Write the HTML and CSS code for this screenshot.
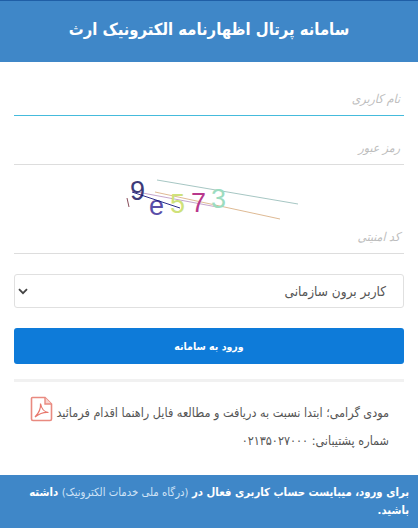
FILE: index.html
```html
<!DOCTYPE html>
<html lang="fa" dir="rtl">
<head>
<meta charset="utf-8">
<title>سامانه پرتال اظهارنامه الکترونیک ارث</title>
<link rel="stylesheet" href="styles.css">
</head>
<body>
<div class="page">
  <header class="header"><h1>سامانه پرتال اظهارنامه الکترونیک ارث</h1></header>
  <main class="form">
    <div class="field active first"><span class="placeholder">نام کاربری</span></div>
    <div class="field"><span class="placeholder">رمز عبور</span></div>
    <div class="captcha-wrap">
      <svg class="captcha" width="184" height="56" viewBox="0 0 184 56" aria-label="captcha">
        <line x1="41" y1="15" x2="182" y2="39" stroke="#8fb8b4" stroke-width="0.8"/>
        <line x1="39" y1="27" x2="164" y2="54" stroke="#d6a878" stroke-width="0.8"/>
        <line x1="16" y1="26" x2="101" y2="42" stroke="#b58fc0" stroke-width="0.8"/>
        <text class="c1" x="14" y="35">9</text>
        <text class="c2" x="33" y="50">e</text>
        <text class="c3" x="54" y="48">5</text>
        <text class="c4" x="75" y="47">7</text>
        <text class="c5" x="95" y="43">3</text>
        <line x1="16" y1="27" x2="64" y2="43" stroke="#14147a" stroke-width="0.9"/>
        <line x1="11" y1="33" x2="13" y2="42" stroke="#6a2030" stroke-width="0.8"/>
      </svg>
    </div>
    <div class="field captcha-field"><span class="placeholder">کد امنیتی</span></div>
    <div class="select">
      <span class="select-text">کاربر برون سازمانی</span>
      <svg class="chev" width="10" height="7" viewBox="0 0 10 7"><path d="M1 1.2 L5 5.2 L9 1.2" fill="none" stroke="#444" stroke-width="1.8"/></svg>
    </div>
    <button class="submit" type="button">ورود به سامانه</button>
    <hr class="divider">
    <p class="note">مودی گرامی؛ ابتدا نسبت به دریافت و مطالعه فایل راهنما اقدام فرمائید
      <svg class="pdf" width="23" height="26" viewBox="0 0 23 26">
        <path d="M2.5 1.5 H15 L21.5 8 V23 Q21.5 24.5 20 24.5 H3 Q1.5 24.5 1.5 23 V2.5 Q1.5 1.5 2.5 1.5 Z" fill="#fff" stroke="#e98a80" stroke-width="1.6"/>
        <path d="M15 1.5 V8 H21.5" fill="#f8d5d0" stroke="#e98a80" stroke-width="1.4"/>
        <path d="M5 21 C8 18 11 13 10.5 7.5 C11.5 13 14 16 18.5 16.5 C14 16 9 18 5 21 Z" fill="none" stroke="#e8776c" stroke-width="1.2"/>
      </svg>
    </p>
    <p class="support">شماره پشتیبانی: ۰۲۱۳۵۰۲۷۰۰۰</p>
  </main>
  <footer class="footer">برای ورود، میبایست حساب کاربری فعال در <span class="light">(درگاه ملی خدمات الکترونیک)</span> داشته باشید.</footer>
</div>
</body>
</html>
```
FILE: styles.css
```css
* { box-sizing: border-box; }
html, body { margin: 0; padding: 0; }
body {
  width: 418px;
  height: 528px;
  overflow: hidden;
  background: #fff;
  font-family: "DejaVu Sans", "Noto Sans", sans-serif;
  font-stretch: condensed;
  color: #555;
}
.page { display: flex; flex-direction: column; height: 528px; }
.header {
  height: 62px;
  background: #3f87c8;
  border-top: 1px solid #1f5ea6;
  padding-bottom: 3px;
  display: flex;
  align-items: center;
  justify-content: center;
  flex: none;
}
.header h1 { margin: 0; color: #fff; font-size: 16.5px; font-weight: 700; line-height: 1; }
.form { flex: 1; padding: 0 14px; display: flex; flex-direction: column; }
.field {
  height: 49px;
  border-bottom: 1px solid #ddd;
  display: flex;
  align-items: flex-end;
  padding: 0 4px 8px 0;
  flex: none;
}
.field.first { height: 54px; }
.field.active { border-bottom-color: #45bbdc; }
.placeholder { font-size: 12.2px; color: #bdbdbd; font-style: italic; line-height: 16px; }
.captcha-wrap { height: 56px; padding-right: 104px; display: flex; flex: none; }
.captcha { display: block; direction: ltr; }
.captcha text { font-family: "Liberation Sans", sans-serif; font-size: 27px; }
.c1 { fill: #3d3a78; }
.c2 { fill: #5a4ea8; font-size: 30px; }
.c3 { fill: #cfe27a; }
.c4 { fill: #b8388c; }
.c5 { fill: #9cdcc0; }
.field.captcha-field { height: 33px; }
.select {
  margin-top: 20px;
  height: 34px;
  border: 1px solid #e0e0e0;
  border-radius: 3px;
  display: flex;
  align-items: center;
  justify-content: space-between;
  padding: 0 17px 0 3px;
  flex: none;
}
.select-text { font-size: 13.5px; color: #555; }
.submit {
  margin-top: 20px;
  height: 36px;
  border: 0;
  border-radius: 3px;
  background: #0e7bd9;
  color: #fff;
  font: 700 10.5px "DejaVu Sans", sans-serif;
  font-stretch: condensed;
  flex: none;
}
.divider { margin: 15px 0 0; height: 3px; border: 0; background: #f1f1f1; flex: none; }
.note {
  margin: 18px 0 0;
  padding-right: 15px;
  font-size: 12.5px;
  line-height: 26px;
  height: 26px;
  white-space: nowrap;
  display: flex;
  align-items: center;
  justify-content: flex-start;
  gap: 3px;
}
.pdf { flex: none; margin-bottom: 8px; }
.support { margin: 3px 0 0; padding-right: 15px; font-size: 12.5px; line-height: 24px; }
.footer {
  flex: none;
  height: 53px;
  background: #3f87c8;
  color: #fff;
  font-size: 11.25px;
  font-weight: 700;
  line-height: 18px;
  padding: 9px 9px 0 9px;
}
.light { font-weight: 400; color: #cfe3f6; }
```
